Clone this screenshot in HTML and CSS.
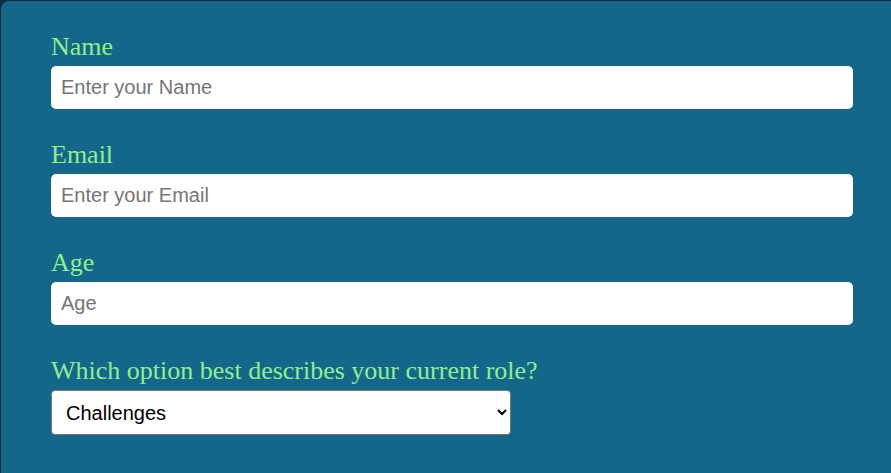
FILE: index.html
```html
<!DOCTYPE html>
<html lang="en">
<head>
<meta charset="utf-8">
<title>Form</title>
<link rel="stylesheet" href="styles.css">
</head>
<body>
<form class="form">
  <div class="field">
    <label class="label" for="name">Name</label>
    <input class="input" id="name" type="text" placeholder="Enter your Name">
  </div>
  <div class="field">
    <label class="label" for="email">Email</label>
    <input class="input" id="email" type="email" placeholder="Enter your Email">
  </div>
  <div class="field">
    <label class="label" for="age">Age</label>
    <input class="input" id="age" type="number" placeholder="Age">
  </div>
  <div class="field">
    <label class="label" for="role">Which option best describes your current role?</label>
    <select class="select" id="role">
      <option>Challenges</option>
    </select>
  </div>
</form>
</body>
</html>
```
FILE: styles.css
```css
html, body {
  margin: 0;
  padding: 0;
  background: #0c2c3b;
  height: 100%;
  overflow: hidden;
}
.form {
  margin: 1px 0 0 1px;
  background: #15678a;
  border-radius: 8px 0 0 0;
  padding: 31px 38px 40px 50px;
  min-height: 600px;
  font-family: "Liberation Serif", "Times New Roman", serif;
}
.field {
  margin-bottom: 31px;
}
.label {
  display: block;
  color: #90ee90;
  font-size: 26px;
  line-height: 30px;
  margin-bottom: 4px;
}
.input {
  display: block;
  box-sizing: border-box;
  width: 100%;
  height: 43px;
  border: none;
  border-radius: 5px;
  padding: 10px;
  font-family: "Liberation Sans", Arial, sans-serif;
  font-size: 20px;
  background: #fff;
  color: #000;
  outline: none;
}
.input::placeholder {
  color: #757575;
}
.select {
  display: block;
  box-sizing: border-box;
  width: 460px;
  height: 45px;
  border: 1px solid #767676;
  border-radius: 4px;
  padding: 10px;
  font-family: "Liberation Sans", Arial, sans-serif;
  font-size: 20px;
  background: #fff;
  color: #000;
}
```
